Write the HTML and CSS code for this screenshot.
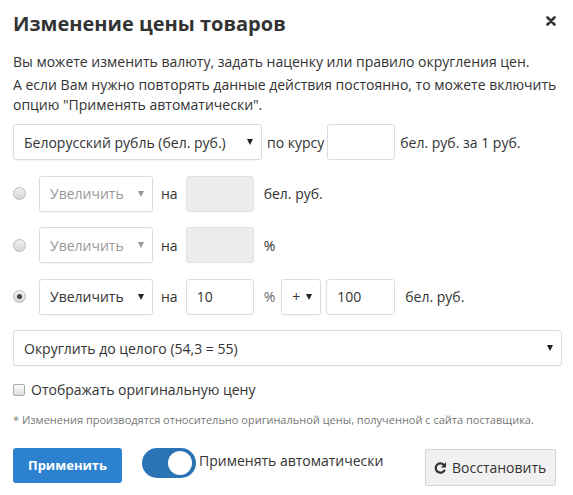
FILE: index.html
```html
<!DOCTYPE html>
<html lang="ru">
<head>
    <meta charset="UTF-8">
    <meta name="viewport" content="width=device-width, initial-scale=1.0">
    <title>Изменение цены товаров</title>
    <link rel="stylesheet" href="styles.css">
</head>
<body>
    <div class="dialog">
        <div class="dialog-head">
            <h1 class="title">Изменение цены товаров</h1>
            <span class="close">
                <svg width="10" height="10" viewBox="0 0 10 10"><path d="M1.5 1.5 L8.5 8.5 M8.5 1.5 L1.5 8.5" stroke="#333" stroke-width="2.6" stroke-linecap="round"/></svg>
            </span>
        </div>

        <p class="intro">Вы можете изменить валюту, задать наценку или правило округления цен.</p>
        <p class="intro">А если Вам нужно повторять данные действия постоянно, то можете включить<br>опцию "Применять автоматически".</p>

        <div class="row">
            <div class="select select-currency"><span>Белорусский рубль (бел. руб.)</span><i class="caret"></i></div>
            <span class="label label-rate">по курсу</span>
            <input class="field" type="text">
            <span class="label label-rate-unit">бел. руб. за 1 руб.</span>
        </div>

        <div class="row">
            <span class="radio"></span>
            <div class="select select-op disabled"><span>Увеличить</span><i class="caret"></i></div>
            <span class="label label-on">на</span>
            <input class="field" type="text" disabled>
            <span class="label label-unit">бел. руб.</span>
        </div>

        <div class="row">
            <span class="radio"></span>
            <div class="select select-op disabled"><span>Увеличить</span><i class="caret"></i></div>
            <span class="label label-on">на</span>
            <input class="field" type="text" disabled>
            <span class="label label-unit">%</span>
        </div>

        <div class="row">
            <span class="radio checked"></span>
            <div class="select select-op"><span>Увеличить</span><i class="caret"></i></div>
            <span class="label label-on">на</span>
            <input class="field" type="text" value="10">
            <span class="label label-pct">%</span>
            <div class="select select-sign"><span>+</span><i class="caret"></i></div>
            <input class="field field-sum" type="text" value="100">
            <span class="label label-unit">бел. руб.</span>
        </div>

        <div class="row">
            <div class="select select-round"><span>Округлить до целого (54,3 = 55)</span><i class="caret"></i></div>
        </div>

        <div class="check-row">
            <span class="checkbox"></span>
            <span>Отображать оригинальную цену</span>
        </div>

        <p class="note">* Изменения производятся относительно оригинальной цены, полученной с сайта поставщика.</p>

        <div class="actions">
            <button class="btn btn-apply">Применить</button>
            <span class="toggle"><span class="knob"></span></span>
            <span class="toggle-label">Применять автоматически</span>
            <button class="btn btn-restore">
                <svg width="13" height="13" viewBox="0 0 14 14"><path d="M10.6 4.2 A5 5 0 1 0 11.6 9.4" fill="none" stroke="#333" stroke-width="2.4"/><path d="M13 1 L13 7 L7.4 7 Z" fill="#333"/></svg>
                Восстановить
            </button>
        </div>
    </div>
</body>
</html>
```

FILE: styles.css
```css
body {
    margin: 0;
    background: #fff;
    font-family: "Open Sans", "Liberation Sans", sans-serif;
    color: #333;
}
.dialog {
    padding: 0 11px 0 13px;
}
.dialog-head {
    display: flex;
    justify-content: space-between;
    align-items: center;
    height: 38px;
    padding-top: 10px;
    box-sizing: border-box;
}
.title {
    margin: 0;
    font-size: 20px;
    font-weight: 700;
    line-height: 28px;
    color: #333;
}
.close {
    display: flex;
    margin-right: 6px;
    margin-top: -6px;
}
.intro {
    margin: 0 0 3px;
    font-size: 14px;
    line-height: 20px;
}
.dialog-head + .intro {
    margin-top: 14px;
}
.intro + .intro {
    margin-bottom: 9px;
}
.row {
    display: flex;
    align-items: center;
    height: 36px;
    margin-bottom: 15.5px;
    font-size: 14px;
}
.select {
    display: flex;
    align-items: center;
    justify-content: space-between;
    height: 36px;
    box-sizing: border-box;
    padding: 0 8px 0 10px;
    border: 1px solid #dcdcdc;
    border-radius: 3px;
    background: #fff;
    box-shadow: 0 1px 1px rgba(0, 0, 0, 0.04);
    font-size: 14px;
    color: #333;
}
.caret {
    width: 0;
    height: 0;
    border-left: 3.5px solid transparent;
    border-right: 3.5px solid transparent;
    border-top: 6px solid #222;
}
.select.disabled {
    color: #999;
}
.select.disabled .caret {
    border-top-color: #999;
}
.select-currency {
    width: 249px;
}
.select-op {
    width: 114px;
    margin-left: 13px;
}
.select-sign {
    width: 40px;
    padding: 0 8px 0 10px;
    margin-left: 6px;
}
.select-round {
    width: 100%;
}
.field {
    width: 68px;
    height: 36px;
    box-sizing: border-box;
    padding: 0 10px;
    border: 1px solid #dcdcdc;
    border-radius: 3px;
    font-family: inherit;
    font-size: 14px;
    color: #333;
    background: #fff;
}
.field:disabled {
    background: #ececea;
    border-color: #e0e0dc;
}
.field-sum {
    width: 69px;
    margin-left: 5px;
}
.label {
    color: #333;
}
.label-rate {
    margin: 0 3px 0 5px;
}
.label-rate-unit {
    margin-left: 5px;
}
.label-on {
    margin: 0 8px;
}
.label-unit {
    margin-left: 10px;
}
.label-pct {
    margin-left: 10px;
    color: #666;
}
.radio {
    width: 13px;
    height: 13px;
    box-sizing: border-box;
    border: 1px solid #b9b9b9;
    border-radius: 50%;
    background: linear-gradient(#f2f2f2, #d6d6d6);
    position: relative;
}
.radio.checked::after {
    content: "";
    position: absolute;
    left: 3px;
    top: 3px;
    width: 5px;
    height: 5px;
    border-radius: 50%;
    background: #444;
}
.check-row {
    display: flex;
    align-items: center;
    gap: 6px;
    height: 16px;
    margin-top: 14px;
    font-size: 14px;
}
.checkbox {
    width: 12px;
    height: 12px;
    box-sizing: border-box;
    border: 1px solid #a9a9a9;
    border-radius: 2px;
    background: linear-gradient(#fbfbfb, #dedede);
}
.note {
    margin: 14px 0 0;
    font-size: 11px;
    line-height: 16px;
    color: #777;
}
.actions {
    display: flex;
    align-items: flex-start;
    margin-top: 20px;
}
.btn {
    font-family: inherit;
    font-size: 13px;
    cursor: pointer;
}
.btn-apply {
    width: 109px;
    height: 35px;
    border: none;
    border-radius: 3px;
    background: #2d82d0;
    color: #fff;
    font-weight: 700;
}
.toggle {
    position: relative;
    width: 54px;
    height: 30px;
    margin-left: 20px;
    border-radius: 15px;
    background: #2a74b6;
}
.knob {
    position: absolute;
    right: 4px;
    top: 3px;
    width: 24px;
    height: 24px;
    border-radius: 50%;
    background: #fff;
}
.toggle-label {
    margin-left: 3px;
    font-size: 14px;
    line-height: 26px;
}
.btn-restore {
    display: flex;
    align-items: center;
    gap: 5px;
    margin-left: auto;
    margin-right: 6px;
    margin-top: 1px;
    width: 131px;
    height: 37px;
    padding: 0 0 0 8px;
    border: 1px solid #d4d4d4;
    border-radius: 2px;
    background: #f1f1f1;
    color: #333;
    font-size: 14px;
}
```
